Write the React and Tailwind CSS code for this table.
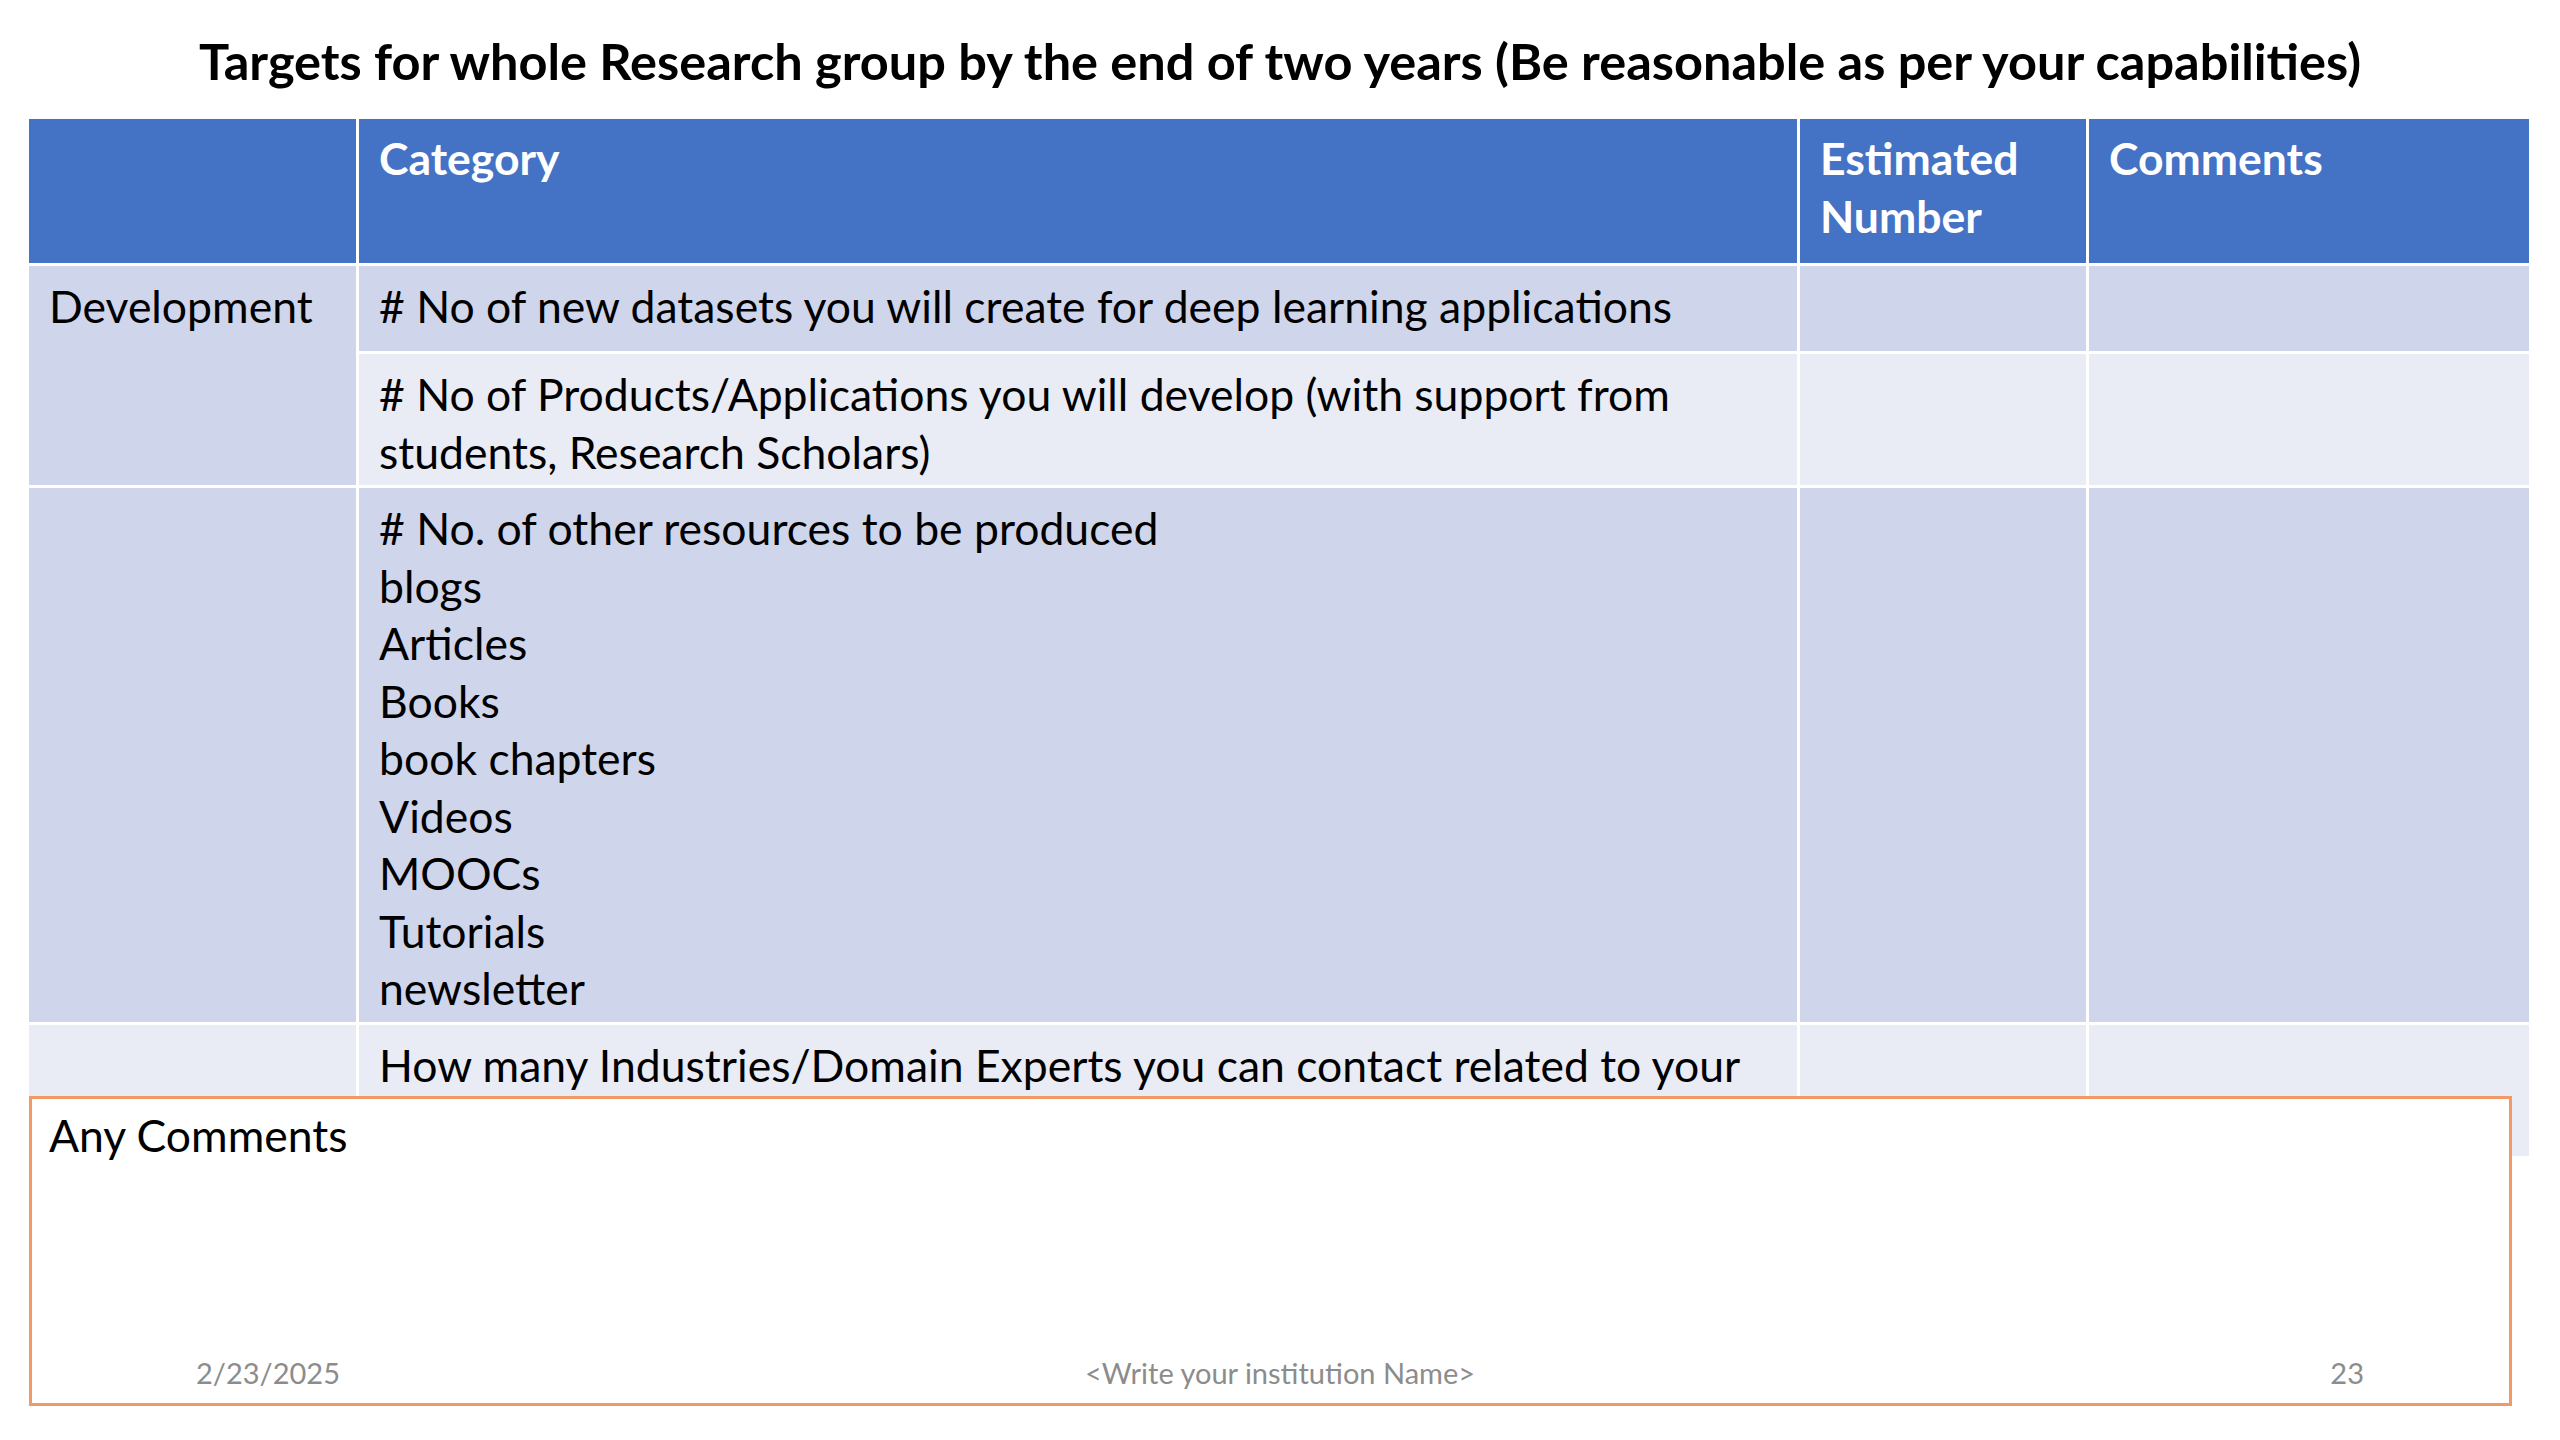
import React from 'react';

const rows = [
  { label: 'Development', labelSpan: 2, text: ['# No of new datasets you will create for deep learning applications'], tone: 'dark', h: 'h-[85px]' },
  { text: ['# No of Products/Applications you will develop (with support from', 'students, Research Scholars)'], tone: 'light', h: 'h-[131px]' },
  {
    label: '',
    text: ['# No. of other resources to be produced', 'blogs', 'Articles', 'Books', 'book chapters', 'Videos', 'MOOCs', 'Tutorials', 'newsletter'],
    tone: 'dark',
    h: 'h-[534px]',
  },
  { label: '', text: ['How many Industries/Domain Experts you can contact related to your', 'research area'], tone: 'light', h: 'h-[131px]' },
];

const toneClass = (tone) => (tone === 'dark' ? 'bg-[#cfd5ea]' : 'bg-[#e9ebf5]');

const App = () => {
  return (
    <div
      className="relative w-[2560px] h-[1440px] bg-white text-black overflow-hidden"
      style={{ fontFamily: 'Lato, "Open Sans", sans-serif' }}
    >
      {/* title */}
      <h1 className="pt-[29px] h-[119px] text-center font-bold text-[50.5px] leading-[64px]">
        Targets for whole Research group by the end of two years (Be reasonable as per your capabilities)
      </h1>

      {/* table */}
      <div className="ml-[29px] w-[2500px] grid grid-cols-[327px_1438px_286px_440px] gap-[3px] bg-white text-[44.5px] leading-[57.5px]">
        <div className="h-[144px] bg-[#4472c4]" />
        <div className="h-[144px] bg-[#4472c4] text-white font-bold pl-[20px] pt-[10px]">Category</div>
        <div className="h-[144px] bg-[#4472c4] text-white font-bold pl-[20px] pt-[10px]">
          Estimated
          <br />
          Number
        </div>
        <div className="h-[144px] bg-[#4472c4] text-white font-bold pl-[20px] pt-[10px]">Comments</div>

        {rows.map((row, i) => (
          <React.Fragment key={i}>
            {row.label !== undefined && (
              <div
                className={`${toneClass(row.tone)} pl-[20px] pt-[11px] ${row.labelSpan === 2 ? 'row-span-2' : ''}`}
              >
                {row.label}
              </div>
            )}
            <div className={`${toneClass(row.tone)} ${row.h} pl-[20px] pt-[11px] overflow-hidden`}>
              {row.text.map((line, j) => (
                <div key={j}>{line}</div>
              ))}
            </div>
            <div className={`${toneClass(row.tone)} ${row.h}`} />
            <div className={`${toneClass(row.tone)} ${row.h}`} />
          </React.Fragment>
        ))}
      </div>

      {/* comments box lies over the table */}
      <div className="absolute left-[29px] top-[1096px] w-[2483px] h-[310px] bg-white border-[3px] border-[#f29a66] pl-[17px] pt-[7px] text-[44.5px] leading-[57.5px]">
        Any Comments
      </div>

      {/* slide footer */}
      <div className="absolute left-0 top-[1355px] w-[2560px] px-[196px] grid grid-cols-3 text-[29px] leading-[36px] text-[#8c8c8c]">
        <div className="text-left">2/23/2025</div>
        <div className="text-center">&lt;Write your institution Name&gt;</div>
        <div className="text-right">23</div>
      </div>
    </div>
  );
};

export default App;
